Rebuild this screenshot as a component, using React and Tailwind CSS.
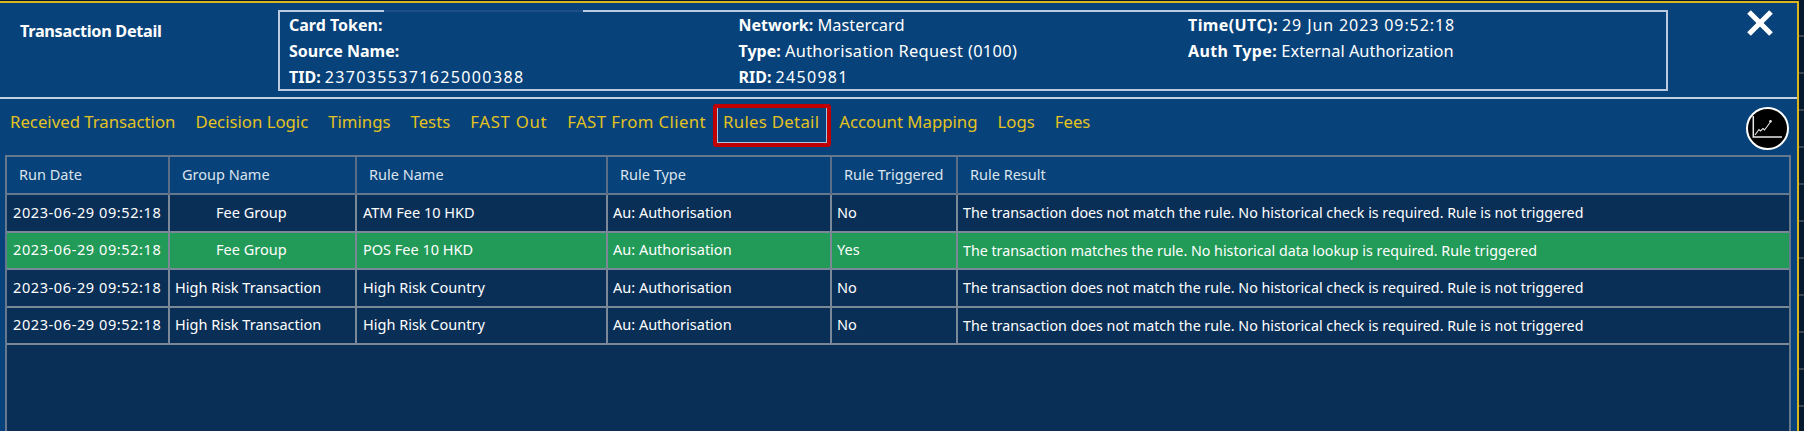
import { X } from "lucide-react";

const tabs = [
  { name: "Received Transaction" },
  { name: "Decision Logic" },
  { name: "Timings" },
  { name: "Tests" },
  { name: "FAST Out", cls: "tracking-[0.7px]" },
  { name: "FAST From Client", cls: "tracking-[0.4px]" },
  { name: "Rules Detail", active: true },
  { name: "Account Mapping" },
  { name: "Logs" },
  { name: "Fees" },
];

const noTrigger = "The transaction does not match the rule. No historical check is required. Rule is not triggered";

const rows = [
  { date: "2023-06-29 09:52:18", group: "Fee Group", rule: "ATM Fee 10 HKD", type: "Au: Authorisation", triggered: "No", result: noTrigger },
  { date: "2023-06-29 09:52:18", group: "Fee Group", rule: "POS Fee 10 HKD", type: "Au: Authorisation", triggered: "Yes", result: "The transaction matches the rule. No historical data lookup is required. Rule triggered" },
  { date: "2023-06-29 09:52:18", group: "High Risk Transaction", rule: "High Risk Country", type: "Au: Authorisation", triggered: "No", result: noTrigger },
  { date: "2023-06-29 09:52:18", group: "High Risk Transaction", rule: "High Risk Country", type: "Au: Authorisation", triggered: "No", result: noTrigger },
];

// [label, value, value classes, label classes]
const info = [
  [["Card Token:", ""], ["Source Name:", ""], ["TID:", "2370355371625000388", "tracking-[1.35px]"]],
  [["Network:", "Mastercard", "text-[16.4px]"], ["Type:", "Authorisation Request (0100)", "text-[16.4px] tracking-[0.32px]"], ["RID:", "2450981", "tracking-[1.3px]"]],
  [["Time(UTC):", "29 Jun 2023 09:52:18", "tracking-[0.9px]", "tracking-[0.4px]"], ["Auth Type:", "External Authorization", "text-[16.4px]", "tracking-[0.4px]"]],
];

function Field({ label, value, cls, labelCls }) {
  return (
    <div className="h-[26px] leading-[26px] whitespace-nowrap">
      <span className={`font-bold ${labelCls || ""}`}>{label}</span> <span className={cls}>{value}</span>
    </div>
  );
}

export default function App() {
  return (
    <div className="w-[1804px] h-[431px] overflow-hidden flex bg-[#051a2c] bg-[repeating-linear-gradient(180deg,transparent_0,transparent_35px,#3a4552_35px,#3a4552_37px)] font-['Noto_Sans',sans-serif]">
      <div className="w-[1799px] h-[431px] shrink-0 flex flex-col mt-px border-t-2 border-r-2 border-[#d9b520] bg-[#07427a] text-white">
        {/* Header */}
        <div className="h-[96px] shrink-0 flex border-b-2 border-[#c3d0e2]">
          <div className="w-[278px] pl-5 pt-[16px] text-[16.25px] font-bold tracking-[-0.3px]">Transaction Detail</div>
          <div className="relative w-[1390px] h-[81px] mt-[7px] flex border-2 border-[#bccadf] pl-[9px] text-[16px]">
            <span className="absolute -top-[2px] left-[104px] w-[199px] h-[2px] bg-[#1c4f85]" />
            {info.map((col, i) => (
              <div key={i} className="w-[449.5px]">
                {col.map(([label, value, cls, labelCls]) => (
                  <Field key={label} label={label} value={value} cls={cls} labelCls={labelCls} />
                ))}
              </div>
            ))}
          </div>
          <div className="flex-1 flex justify-end pr-[15px]">
            <X className="w-[44px] h-[44px] -mt-[2px] text-white" strokeWidth={2.8} strokeLinecap="butt" />
          </div>
        </div>

        {/* Tabs */}
        <div className="h-[56px] shrink-0 flex items-start pl-[10px] pr-[8px] text-[16.75px] text-[#e3c21f]">
          <div className="flex gap-[20px] pt-[11px]">
            {tabs.map((tab) =>
              tab.active ? (
                <div key={tab.name} className="-ml-[13px] -mr-[12px] -mt-[6px] h-[43px] pl-[6px] pr-[8px] pb-[7px] flex items-center border-4 border-[#c00000] rounded-[3px] whitespace-nowrap tracking-[0.3px] shadow-[inset_1px_0_0_#a9c3de,inset_-1px_0_0_#a9c3de,inset_0_-1px_0_#a9c3de]">
                  {tab.name}
                </div>
              ) : (
                <div key={tab.name} className={`h-[24px] leading-[24px] whitespace-nowrap ${tab.cls || ""}`}>
                  {tab.name}
                </div>
              )
            )}
          </div>
          <button className="ml-auto mt-[8px] w-[43px] h-[43px] rounded-full bg-black border-2 border-white">
            <svg viewBox="0 0 39 39" className="w-[39px] h-[39px]" fill="none" stroke="#e8e8e8">
              <path d="M5.3 7v21H34" strokeWidth="1.5" />
              <path d="M7 26l4-5.500 1.500 1.500 2.500-2.500 1.500 1.500 6-8" strokeWidth="1.1" />
              <circle cx="22.500" cy="12.300" r="1.300" fill="#e8e8e8" stroke="none" />
            </svg>
          </button>
        </div>

        {/* Rules table */}
        <div className="flex-1 ml-[5px] mr-[6px] bg-[#0a2f57] border-x-2 border-t-2 border-[#66788e] text-[14.5px]">
          <table className="w-full table-fixed border-collapse">
            <colgroup>
              <col className="w-[162px]" />
              <col className="w-[187px]" />
              <col className="w-[251px]" />
              <col className="w-[224px]" />
              <col className="w-[126px]" />
              <col />
            </colgroup>
            <thead>
              <tr className="h-[37px] bg-[#07427a] text-[#dbe4ee] text-[14.5px] border-b-2 border-[#66788e]">
                {["Run Date", "Group Name", "Rule Name", "Rule Type", "Rule Triggered", "Rule Result"].map((h, i) => (
                  <th key={h} className={`font-normal text-left pl-3 ${i < 5 ? "border-r-2 border-[#5b6e85]" : ""}`}>
                    {h}
                  </th>
                ))}
              </tr>
            </thead>
            <tbody>
              {rows.map((r, i) => (
                <tr key={i} className={`h-[37.5px] border-b-2 border-[#7b8898] ${r.triggered === "Yes" ? "bg-[#229a58]" : ""}`}>
                  <td className="pl-[6px] border-r-2 border-[#7b8898] whitespace-nowrap tracking-[0.6px]">{r.date}</td>
                  <td className={`border-r-2 border-[#7b8898] whitespace-nowrap ${r.group === "Fee Group" ? "pl-[46px]" : "pl-[5px]"}`}>{r.group}</td>
                  <td className="pl-[6px] border-r-2 border-[#7b8898] whitespace-nowrap">{r.rule}</td>
                  <td className="pl-[5px] border-r-2 border-[#7b8898] whitespace-nowrap">{r.type}</td>
                  <td className="pl-[5px] border-r-2 border-[#7b8898]">{r.triggered}</td>
                  <td className="pl-[5px] whitespace-nowrap text-[14.25px]">{r.result}</td>
                </tr>
              ))}
            </tbody>
          </table>
        </div>
      </div>
    </div>
  );
}
